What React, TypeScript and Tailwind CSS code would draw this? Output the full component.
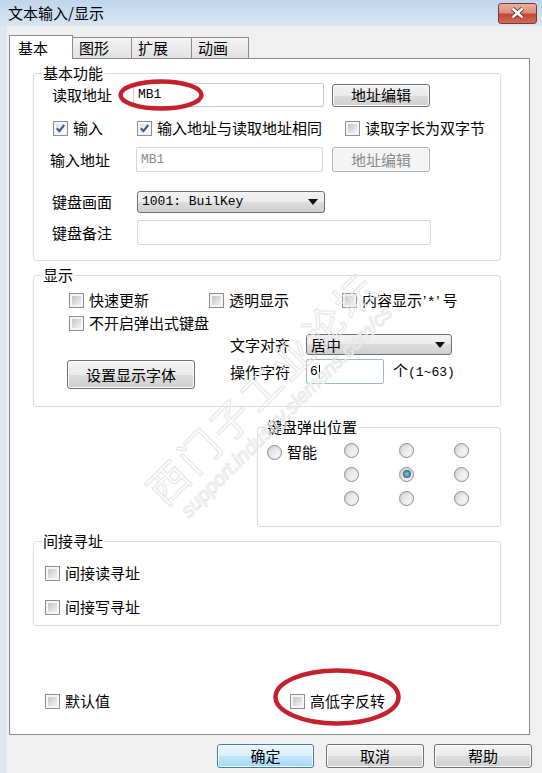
import React from 'react';

const CheckBox: React.FC<{ checked?: boolean }> = ({ checked = false }) => (
  <span className="relative inline-block w-[15px] h-[15px] shrink-0 border border-[#8e8f8f] bg-[#f6f6f6] p-[2px]">
    {checked ? (
      <span className="block w-full h-full bg-linear-to-br from-[#dfe4ea] to-[#fbfbfb]" />
    ) : (
      <span className="block w-full h-full bg-linear-to-br from-[#c4c4c4] to-[#f3f3f3]" />
    )}
    {checked && (
      <svg className="absolute left-[0px] top-[0px]" width="13" height="13" viewBox="0 0 13 13">
        <path d="M2.8 6.2 L5.4 9.2 L10.2 3" fill="none" stroke="#3b5d8f" strokeWidth="2.1" />
      </svg>
    )}
  </span>
);

const Check: React.FC<{ label: React.ReactNode; checked?: boolean; className?: string }> = ({
  label,
  checked,
  className = '',
}) => (
  <span className={`flex items-center gap-[5px] leading-[20px] ${className}`}>
    <CheckBox checked={checked} />
    <span className="whitespace-nowrap">{label}</span>
  </span>
);

const Radio: React.FC<{ checked?: boolean }> = ({ checked = false }) => (
  <span className="inline-flex items-center justify-center w-[15px] h-[15px] shrink-0 rounded-full border border-[#8c8c8c] bg-linear-to-br from-[#cfcfcf] to-[#f7f7f7]">
    {checked ? (
      <span className="w-[8px] h-[8px] rounded-full bg-radial from-[#8fd0f0] to-[#123f66]" />
    ) : (
      <span className="w-[9px] h-[9px] rounded-full bg-linear-to-br from-[#dcdcdc] to-[#fbfbfb]" />
    )}
  </span>
);

const Btn: React.FC<{
  children: React.ReactNode;
  className?: string;
  disabled?: boolean;
  primary?: boolean;
}> = ({ children, className = '', disabled, primary }) => {
  let look =
    'border-[#707070] bg-[linear-gradient(#f3f3f3_0%,#ebebeb_50%,#dddddd_50%,#cfcfcf_100%)] text-black';
  if (primary)
    look =
      'border-[#3c7fb1] bg-[linear-gradient(#eaf6fd_0%,#d9f0fc_50%,#bee6fd_50%,#a7d9f5_100%)] text-black';
  if (disabled) look = 'border-[#adb2b5] bg-[#f4f4f4] text-[#8a8a8a]';
  return (
    <span
      className={`flex items-center justify-center rounded-[3px] border shadow-[inset_0_0_0_1px_#fcfcfc] leading-[20px] ${look} ${className}`}
    >
      {children}
    </span>
  );
};

const Arrow = () => (
  <svg width="10" height="6" viewBox="0 0 10 6">
    <path d="M0 0 H10 L5 6 Z" fill="#111" />
  </svg>
);

const Group: React.FC<{ label: string; className?: string; children: React.ReactNode }> = ({
  label,
  className = '',
  children,
}) => (
  <div className={`relative rounded-[3px] border border-[#d5dfe5] ${className}`}>
    <span className="absolute -top-[11px] left-[8px] bg-white px-[1px] leading-[20px]">{label}</span>
    {children}
  </div>
);

const Ellipse: React.FC<{ className: string; w: number; h: number }> = ({ className, w, h }) => (
  <svg className={`absolute pointer-events-none ${className}`} width={w} height={h} viewBox={`0 0 ${w} ${h}`}>
    <ellipse cx={w / 2} cy={h / 2} rx={w / 2 - 2.5} ry={h / 2 - 2.5} fill="none" stroke="#c6202c" strokeWidth="4.5" />
  </svg>
);

export default function App() {
  return (
    <div className="relative w-[542px] h-[773px] overflow-hidden bg-[#f0f0f0] font-['Noto_Sans_CJK_SC',sans-serif] text-[15px] text-black">
      {/* title bar */}
      <div className="h-[26px] flex items-center justify-between pl-[8px] pr-[5px] bg-linear-to-b from-[#c0d5ec] to-[#d9e6f3]">
        <span className="leading-[20px]">文本输入/显示</span>
        <span className="w-[39px] h-[21px] flex items-center justify-center rounded-[3px] border border-[#7a3a32] bg-[linear-gradient(#eab0a0_0%,#dc8f7b_45%,#c4473a_55%,#d06a55_100%)]">
          <svg width="15" height="12" viewBox="0 0 15 12">
            <path d="M2.5 1.5 L12.5 10.5 M12.5 1.5 L2.5 10.5" stroke="#5a2018" strokeWidth="4.2" />
            <path d="M2.5 1.5 L12.5 10.5 M12.5 1.5 L2.5 10.5" stroke="#ffffff" strokeWidth="2.6" />
          </svg>
        </span>
      </div>

      <div className="flex">
        <div className="w-[7px] h-[747px] bg-[#dde7f2]" />
        <div className="flex flex-col">
          {/* tabs */}
          <div className="flex items-end h-[32px] pl-[2px]">
            <span className="relative z-10 -mb-[1px] w-[64px] h-[24px] flex items-center pl-[8px] border border-b-0 border-[#898c95] bg-white leading-[20px]">
              基本
            </span>
            <span className="w-[59px] h-[21px] flex items-center pl-[6px] border-t border-r border-[#898c95] bg-linear-to-b from-[#f4f4f4] to-[#e1e1e1] leading-[20px]">
              图形
            </span>
            <span className="w-[60px] h-[21px] flex items-center pl-[6px] border-t border-r border-[#898c95] bg-linear-to-b from-[#f4f4f4] to-[#e1e1e1] leading-[20px]">
              扩展
            </span>
            <span className="w-[57px] h-[21px] flex items-center pl-[6px] border-t border-r border-[#898c95] bg-linear-to-b from-[#f4f4f4] to-[#e1e1e1] leading-[20px]">
              动画
            </span>
          </div>

          {/* tab panel */}
          <div className="ml-[2px] w-[521px] h-[677px] border border-[#898c95] bg-white">
            {/* 基本功能 */}
            <Group label="基本功能" className="ml-[23px] mt-[14px] w-[468px] h-[188px]">
              <div className="flex items-center h-[24px] mt-[9px]">
                <span className="w-[99px] pl-[18px] leading-[20px]">读取地址</span>
                <span className="w-[191px] h-[24px] flex items-center pl-[4px] border border-[#c7ccd3] rounded-[2px] font-['Liberation_Mono',monospace] text-[13px]">
                  MB1
                </span>
                <Btn className="ml-[8px] w-[98px] h-[23px]">地址编辑</Btn>
              </div>
              <div className="flex items-center h-[20px] mt-[11px] pl-[19px]">
                <Check label="输入" checked className="w-[84px]" />
                <Check label="输入地址与读取地址相同" checked className="w-[208px]" />
                <Check label="读取字长为双字节" />
              </div>
              <div className="flex items-center h-[25px] mt-[9px]">
                <span className="w-[102px] pl-[16px] leading-[20px]">输入地址</span>
                <span className="w-[187px] h-[25px] flex items-center pl-[4px] border border-[#d3d7dc] rounded-[2px] font-['Liberation_Mono',monospace] text-[13px] text-[#8c8c8c]">
                  MB1
                </span>
                <Btn disabled className="ml-[9px] w-[98px] h-[25px]">
                  地址编辑
                </Btn>
              </div>
              <div className="flex items-center h-[22px] mt-[19px]">
                <span className="w-[103px] pl-[18px] leading-[20px]">键盘画面</span>
                <span className="w-[188px] h-[22px] flex items-center justify-between pl-[4px] pr-[6px] rounded-[3px] border border-[#707070] bg-[linear-gradient(#f3f3f3_0%,#ebebeb_50%,#dddddd_50%,#cfcfcf_100%)] font-['Liberation_Mono',monospace] text-[13px]">
                  1001: BuilKey
                  <Arrow />
                </span>
              </div>
              <div className="flex items-center h-[25px] mt-[7px]">
                <span className="w-[103px] pl-[18px] leading-[20px]">键盘备注</span>
                <span className="w-[294px] h-[25px] border border-[#d3d7dc] rounded-[2px]" />
              </div>
            </Group>

            {/* 显示 */}
            <Group label="显示" className="ml-[23px] mt-[14px] w-[468px] h-[132px]">
              <div className="flex items-center h-[20px] mt-[14px] pl-[35px]">
                <Check label="快速更新" className="w-[140px]" />
                <Check label="透明显示" className="w-[133px]" />
                <Check
                  label={
                    <>
                      内容显示
                      <span className="font-['Liberation_Sans',sans-serif] mx-[1px] tracking-[2px]">’*’</span>号
                    </>
                  }
                />
              </div>
              <div className="flex items-center h-[20px] mt-[3px] pl-[35px]">
                <Check label="不开启弹出式键盘" />
              </div>
              <div className="flex mt-[1px]">
                <Btn className="ml-[33px] mt-[26px] w-[128px] h-[29px]">设置显示字体</Btn>
                <div className="ml-[35px] flex flex-col">
                  <div className="flex items-center h-[21px]">
                    <span className="w-[76px] leading-[20px]">文字对齐</span>
                    <span className="w-[146px] h-[21px] flex items-center justify-between pl-[4px] pr-[6px] rounded-[3px] border border-[#707070] bg-[linear-gradient(#f3f3f3_0%,#ebebeb_50%,#dddddd_50%,#cfcfcf_100%)] leading-[20px]">
                      居中
                      <Arrow />
                    </span>
                  </div>
                  <div className="flex items-center h-[25px] mt-[4px]">
                    <span className="w-[76px] leading-[20px]">操作字符</span>
                    <span className="w-[78px] h-[25px] flex items-center pl-[3px] border border-[#9fb7cc] rounded-[2px] font-['Liberation_Mono',monospace] text-[13px]">
                      6<span className="ml-[1px] w-[1px] h-[14px] bg-black" />
                    </span>
                    <span className="ml-[9px] leading-[20px] whitespace-nowrap">
                      个<span className="font-['Liberation_Mono',monospace] text-[13px]">(1~63)</span>
                    </span>
                  </div>
                </div>
              </div>
            </Group>

            {/* 键盘弹出位置 */}
            <Group label="键盘弹出位置" className="ml-[247px] mt-[20px] w-[244px] h-[100px]">
              <div className="flex pt-[10px]">
                <span className="w-[66px] pl-[9px] h-[24px] mt-[2px] flex items-center gap-[5px] leading-[20px]">
                  <Radio />
                  智能
                </span>
                <div className="grid grid-cols-[55px_55px_55px] auto-rows-[24px]">
                  {[0, 1, 2, 3, 4, 5, 6, 7, 8].map((i) => (
                    <span key={i} className="flex items-center justify-center">
                      <Radio checked={i === 4} />
                    </span>
                  ))}
                </div>
              </div>
            </Group>

            {/* 间接寻址 */}
            <Group label="间接寻址" className="ml-[23px] mt-[14px] w-[468px] h-[85px]">
              <div className="flex items-center h-[20px] mt-[21px] pl-[11px]">
                <Check label="间接读寻址" />
              </div>
              <div className="flex items-center h-[20px] mt-[14px] pl-[11px]">
                <Check label="间接写寻址" />
              </div>
            </Group>

            <div className="flex items-center h-[20px] mt-[65px] pl-[35px]">
              <Check label="默认值" className="w-[245px]" />
              <Check label="高低字反转" />
            </div>
          </div>

          {/* dialog buttons */}
          <div className="flex mt-[9px]">
            <Btn primary className="ml-[210px] w-[97px] h-[24px]">
              确定
            </Btn>
            <Btn className="ml-[12px] w-[98px] h-[24px]">取消</Btn>
            <Btn className="ml-[10px] w-[98px] h-[24px]">帮助</Btn>
          </div>
        </div>
      </div>

      {/* watermark */}
      <div className="absolute left-[60px] top-[360px] w-[420px] -rotate-[45deg] pointer-events-none text-center select-none">
        <div className="text-[40px] leading-[46px] tracking-[4px] text-transparent [-webkit-text-stroke:1px_#e6e6e6]">
          西门子工业论坛
        </div>
        <div className="font-['Liberation_Sans',sans-serif] italic text-[20px] leading-[24px] text-transparent [-webkit-text-stroke:1px_#e8e8e8]">
          support.industry.siemens.com/cs
        </div>
      </div>

      {/* annotation ellipses */}
      <Ellipse className="left-[118px] top-[79px]" w={86} h={32} />
      <Ellipse className="left-[273px] top-[668px]" w={128} h={58} />
    </div>
  );
}
